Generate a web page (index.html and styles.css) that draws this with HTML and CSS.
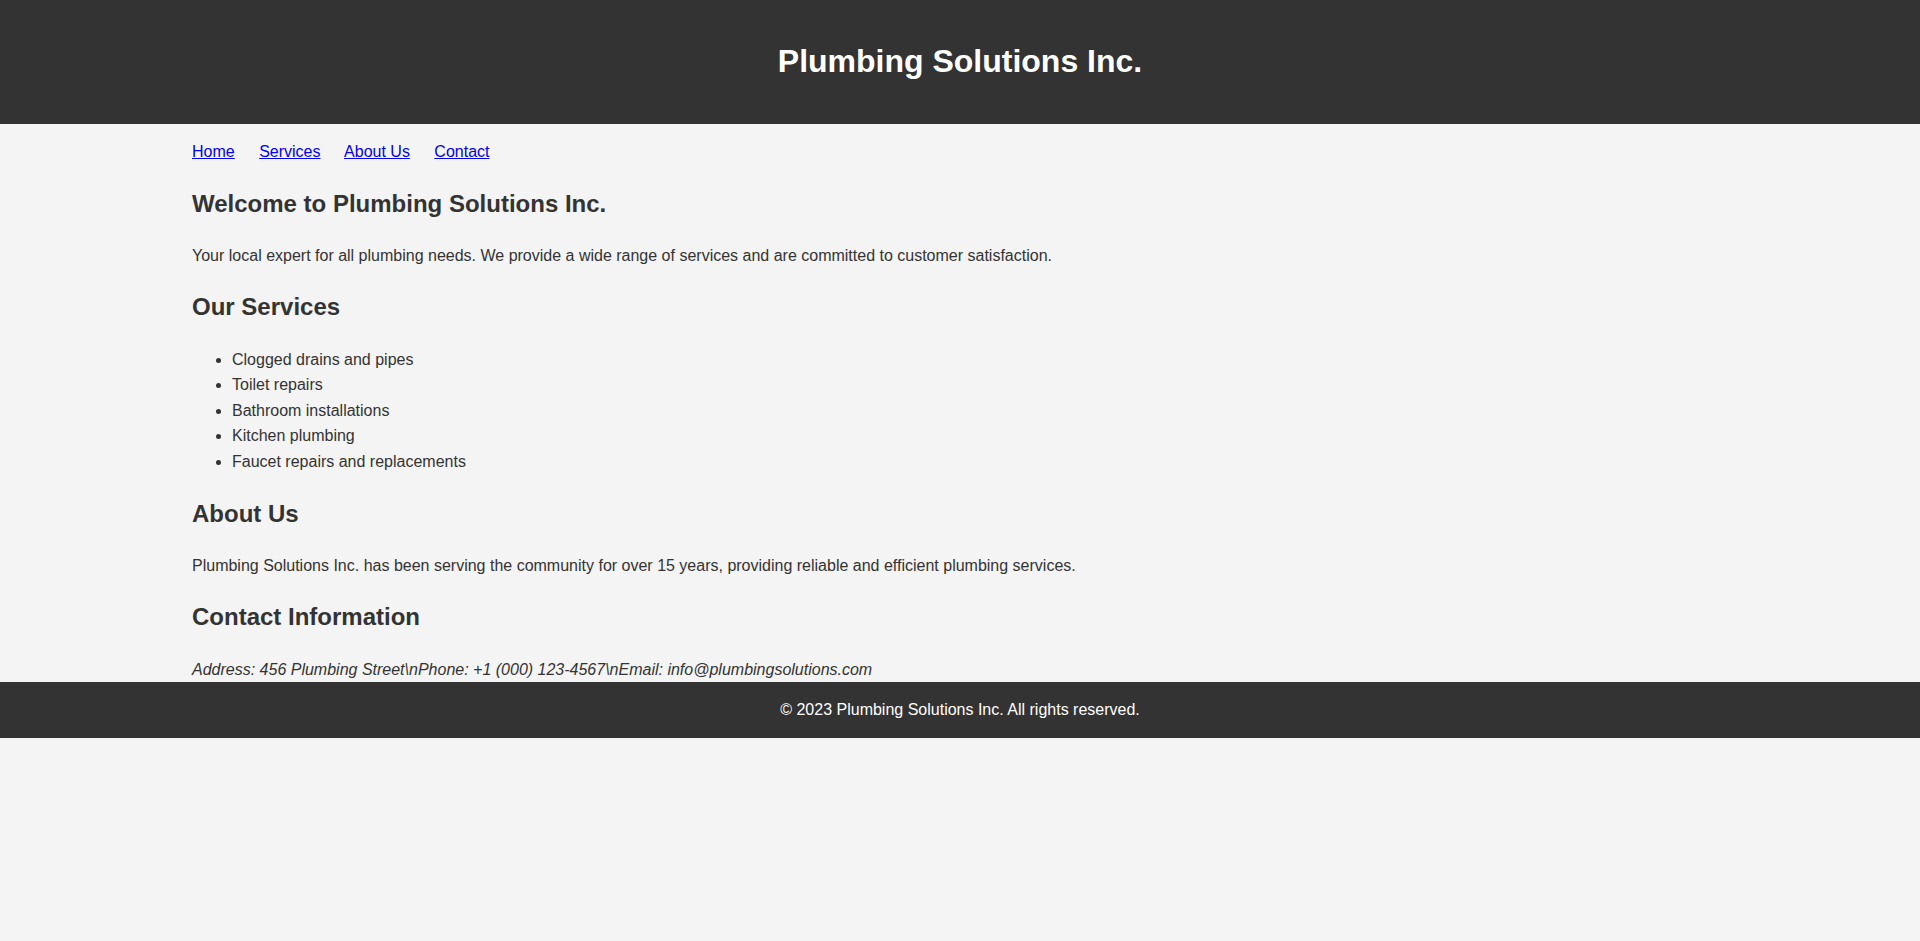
FILE: index.html
```html
<!DOCTYPE html>
<html lang="en">
<head>
<meta charset="utf-8">
<title>Plumbing Solutions Inc.</title>
<link rel="stylesheet" href="styles.css">
</head>
<body>
<header class="site-header">
  <h1 class="site-title">Plumbing Solutions Inc.</h1>
</header>
<main class="container">
  <nav class="main-nav">
    <a href="#home">Home</a>
    <a href="#services">Services</a>
    <a href="#about">About Us</a>
    <a href="#contact">Contact</a>
  </nav>
  <section id="home">
    <h2>Welcome to Plumbing Solutions Inc.</h2>
    <p>Your local expert for all plumbing needs. We provide a wide range of services and are committed to customer satisfaction.</p>
  </section>
  <section id="services">
    <h2>Our Services</h2>
    <ul class="service-list">
      <li>Clogged drains and pipes</li>
      <li>Toilet repairs</li>
      <li>Bathroom installations</li>
      <li>Kitchen plumbing</li>
      <li>Faucet repairs and replacements</li>
    </ul>
  </section>
  <section id="about">
    <h2>About Us</h2>
    <p>Plumbing Solutions Inc. has been serving the community for over 15 years, providing reliable and efficient plumbing services.</p>
  </section>
  <section id="contact">
    <h2>Contact Information</h2>
    <address class="contact-info">Address: 456 Plumbing Street\nPhone: +1 (000) 123-4567\nEmail: info@plumbingsolutions.com</address>
  </section>
</main>
<footer class="site-footer">
  <p>&copy; 2023 Plumbing Solutions Inc. All rights reserved.</p>
</footer>
</body>
</html>
```
FILE: styles.css
```css
html, body {
  margin: 0;
  padding: 0;
}

body {
  font-family: "Liberation Sans", Arial, sans-serif;
  font-size: 16px;
  line-height: 1.6;
  background: #f4f4f4;
  color: #333;
}

.site-header {
  background: #333;
  color: #fff;
  padding: 15px 0;
  text-align: center;
}

.site-title {
  font-size: 32px;
  margin: 21.44px 0;
}

.container {
  width: 80%;
  margin: 0 auto;
  padding-top: 15px;
}

.main-nav a {
  color: #0000ee;
  text-decoration: underline;
  margin-right: 20px;
}

h2 {
  font-size: 24px;
  margin: 19.92px 0;
}

p {
  margin: 16px 0;
}

.service-list {
  margin: 16px 0;
  padding-left: 40px;
}

.contact-info {
  font-style: italic;
  margin: 0;
}

.site-footer {
  background: #333;
  color: #fff;
  text-align: center;
  padding: 15px 0;
}

.site-footer p {
  margin: 0;
}
```
